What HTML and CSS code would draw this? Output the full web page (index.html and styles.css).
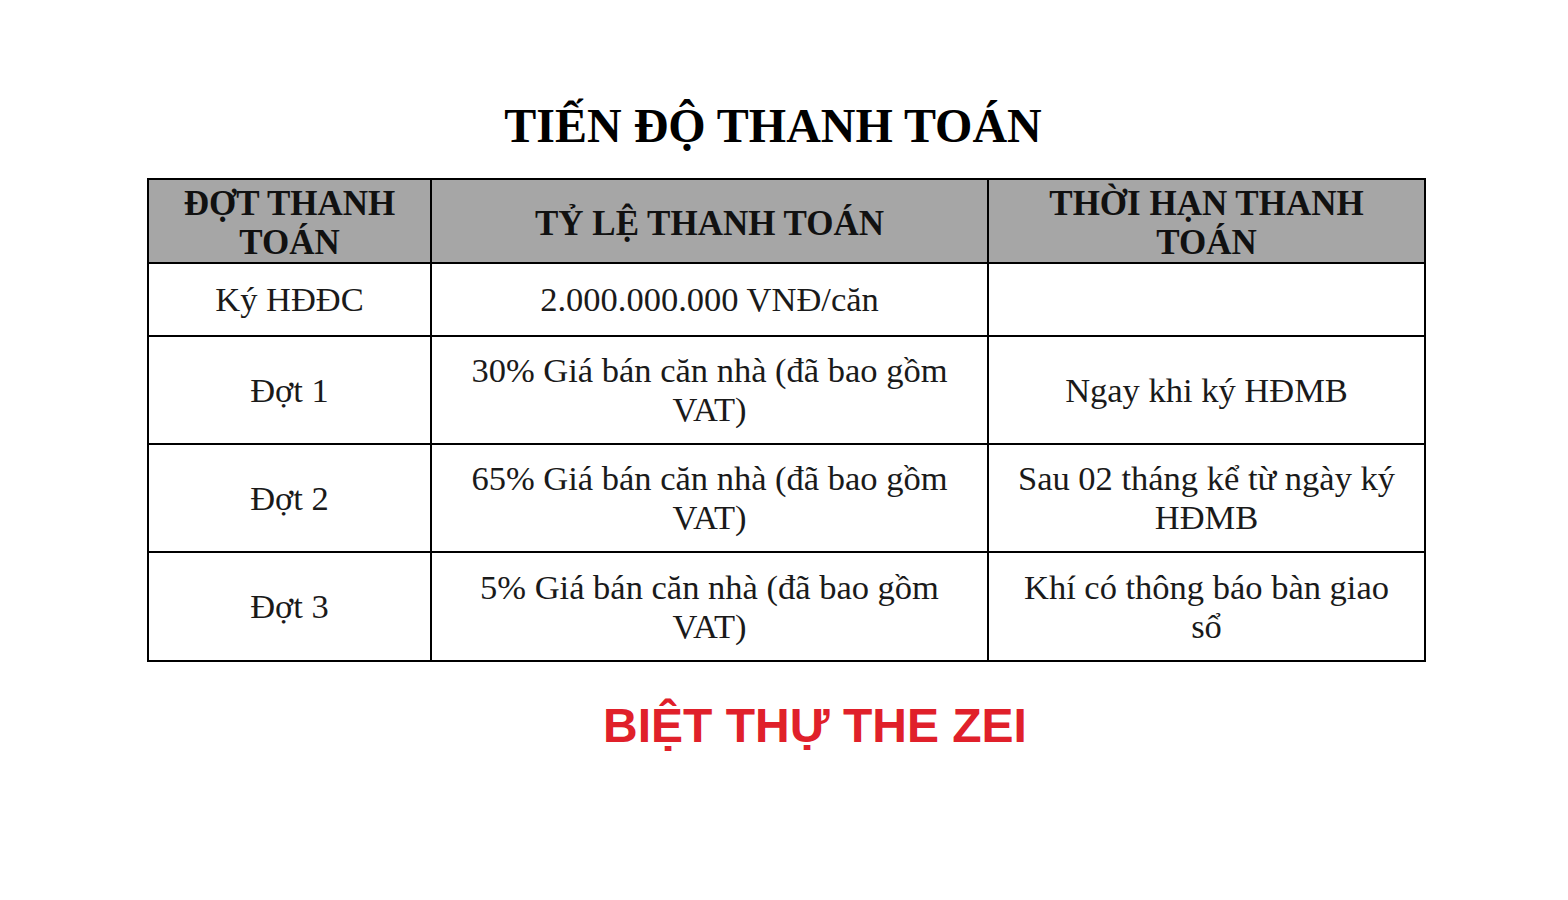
FILE: index.html
```html
<!DOCTYPE html>
<html lang="vi">
<head>
<meta charset="utf-8">
<title>Tiến độ thanh toán</title>
<link rel="stylesheet" href="styles.css">
</head>
<body>
<main class="page">
  <h1 class="title">TIẾN ĐỘ THANH TOÁN</h1>
  <table class="pay">
    <colgroup>
      <col class="c1"><col class="c2"><col class="c3">
    </colgroup>
    <thead>
      <tr class="head">
        <th>ĐỢT THANH<br>TOÁN</th>
        <th>TỶ LỆ THANH TOÁN</th>
        <th>THỜI HẠN THANH<br>TOÁN</th>
      </tr>
    </thead>
    <tbody>
      <tr class="r-short">
        <td>Ký HĐĐC</td>
        <td>2.000.000.000 VNĐ/căn</td>
        <td></td>
      </tr>
      <tr class="r-tall">
        <td>Đợt 1</td>
        <td>30% Giá bán căn nhà (đã bao gồm<br>VAT)</td>
        <td>Ngay khi ký HĐMB</td>
      </tr>
      <tr class="r-tall">
        <td>Đợt 2</td>
        <td>65% Giá bán căn nhà (đã bao gồm<br>VAT)</td>
        <td>Sau 02 tháng kể từ ngày ký<br>HĐMB</td>
      </tr>
      <tr class="r-tall">
        <td>Đợt 3</td>
        <td>5% Giá bán căn nhà (đã bao gồm<br>VAT)</td>
        <td>Khí có thông báo bàn giao<br>sổ</td>
      </tr>
    </tbody>
  </table>
  <p class="brand">BIỆT THỰ THE ZEI</p>
</main>
</body>
</html>
```
FILE: styles.css
```css
html, body {
  margin: 0;
  padding: 0;
  background: #ffffff;
}
.page {
  width: 1278px;
  margin-left: 147px;
  padding-top: 96px;
  display: flex;
  flex-direction: column;
}
.title {
  margin: 0 26px 0 0;
  font-family: "Liberation Serif", "Times New Roman", serif;
  font-weight: bold;
  font-size: 48px;
  line-height: 60px;
  text-align: center;
  color: #000;
}
.pay {
  margin-top: 22px;
  width: 1277px;
  border-collapse: collapse;
  table-layout: fixed;
  font-family: "Liberation Serif", "Times New Roman", serif;
  color: #1a1a1a;
}
.c1 { width: 283px; }
.c2 { width: 557px; }
.c3 { width: 437px; }
.pay th, .pay td {
  border: 2px solid #000;
  text-align: center;
  vertical-align: middle;
  padding: 0 4px;
}
.pay th {
  background: #a6a6a6;
  font-weight: bold;
  font-size: 35px;
  line-height: 39px;
  height: 76px;
  padding-top: 4px;
  color: #111;
}
.pay td {
  font-size: 34.5px;
  line-height: 39px;
}
.r-short td { height: 71px; }
.r-tall td { height: 106px; }
.r-tall:last-child td { height: 107px; }
.brand {
  margin: 36px 0 0 58px;
  font-family: "Liberation Sans", Arial, sans-serif;
  font-weight: bold;
  font-size: 48px;
  line-height: 56px;
  text-align: center;
  color: #e0202a;
}
```
